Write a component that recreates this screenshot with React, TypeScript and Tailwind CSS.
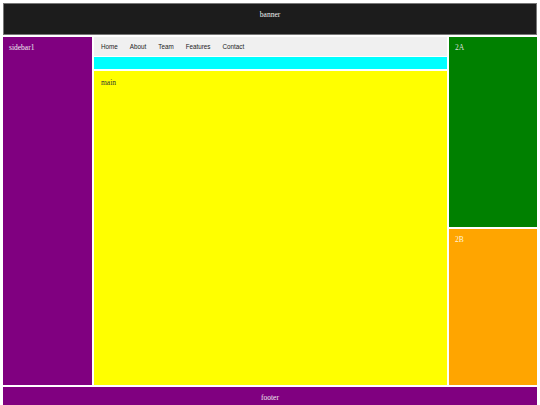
const navLinks = ['Home', 'About', 'Team', 'Features', 'Contact'];

export default function App() {
  return (
    <div className="min-h-screen bg-white p-[3px] flex flex-col gap-[2px] font-['Liberation_Serif',serif] text-[7.5px]">
      {/* Banner */}
      <header className="h-[32px] bg-[#1c1c1c] border border-[#777] text-[#eee] text-center pt-[5px]">
        banner
      </header>

      {/* Body */}
      <div className="h-[348px] grid grid-cols-[89px_1fr_88px] gap-[2px]">
        <aside className="bg-[#800080] text-[#eee] px-[6px] py-[5px]">sidebar1</aside>

        <div className="flex flex-col gap-[1px]">
          <nav className="h-[19px] bg-[#f0f0f0] flex items-center gap-[12px] px-[7px] font-['Liberation_Sans',Arial,sans-serif] text-[6.3px] text-[#222]">
            {navLinks.map((link) => (
              <span key={link}>{link}</span>
            ))}
          </nav>
          <div className="h-[12px] bg-[#00ffff]" />
          <main className="flex-1 mt-[1px] bg-[#ffff00] text-[#333] px-[7px] py-[6px]">main</main>
        </div>

        <div className="flex flex-col gap-[2px]">
          <section className="h-[190px] bg-[#008000] text-[#ddd] px-[6px] py-[5px]">2A</section>
          <section className="flex-1 bg-[#ffa500] text-[#fff4dd] px-[6px] py-[5px]">2B</section>
        </div>
      </div>

      {/* Footer */}
      <footer className="h-[32px] shrink-0 bg-[#800080] text-[#eee] text-center pt-[5px]">footer</footer>
    </div>
  );
}
